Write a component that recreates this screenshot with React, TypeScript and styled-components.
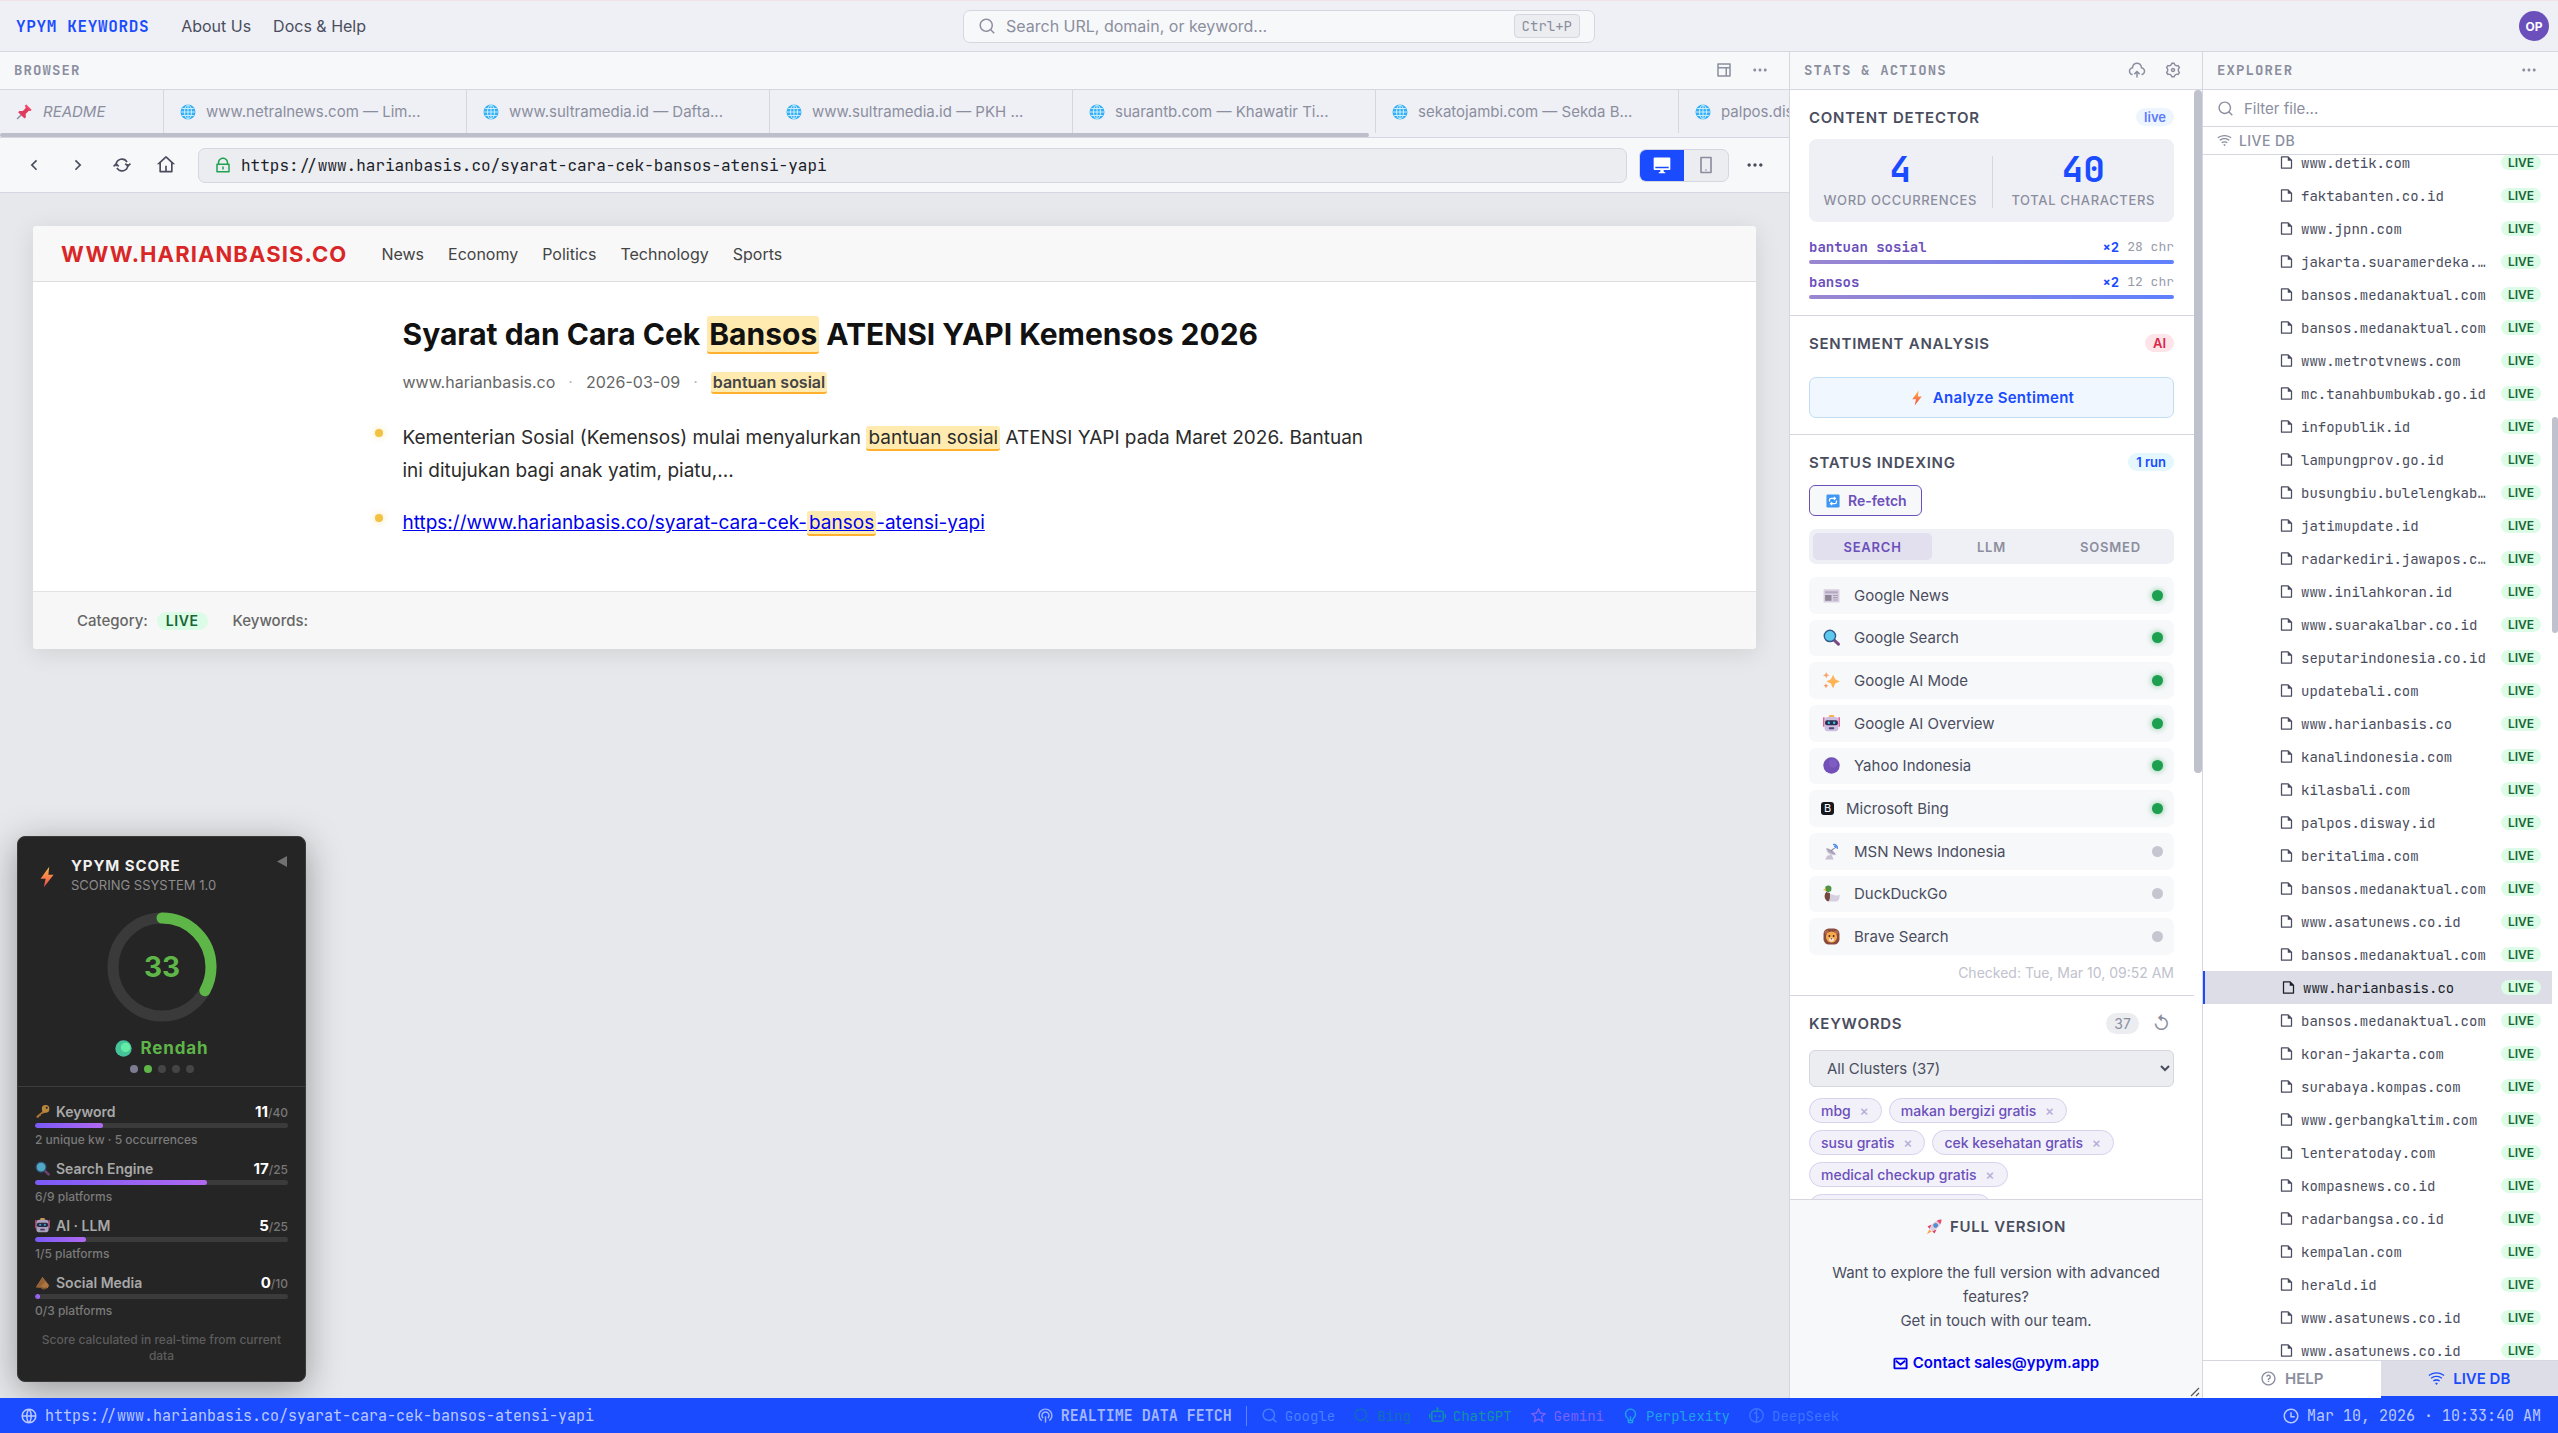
import React from "react";
import styled, { createGlobalStyle, css } from "styled-components";
import {
  RiSearchLine,
  RiSearch2Line,
  RiLayoutLine,
  RiMoreFill,
  RiUploadCloud2Line,
  RiSettings3Line,
  RiArrowLeftSLine,
  RiArrowRightSLine,
  RiHome4Line,
  RiLockLine,
  RiMacFill,
  RiSmartphoneLine,
  RiFile3Line,
  RiWifiLine,
  RiQuestionLine,
  RiTimeLine,
  RiGlobalLine,
  RiSignalTowerLine,
  RiRobot2Line,
  RiStarLine,
  RiLightbulbLine,
} from "react-icons/ri";

const c = {
  border: "#d5d6df",
  chrome: "#eff0f5",
  panel: "#f7f8fa",
  muted: "#8b8e9e",
  text: "#4a4d5e",
  dark: "#1b1d2a",
  blue: "#1a4bff",
  purple: "#6b4fbb",
};
const sans = `Inter, "Noto Sans", sans-serif`;
const mono = `"JetBrains Mono", "DejaVu Sans Mono", monospace`;

const Global = createGlobalStyle`
  *, *::before, *::after { box-sizing: border-box; }
  body { margin: 0; font-family: ${sans}; font-size: 15px; color: ${c.text}; background: #fff; }
  button, input, select { font: inherit; color: inherit; }
  button { background: none; border: 0; padding: 0; cursor: pointer; }
  h1, h2, h3, p, ul { margin: 0; padding: 0; }
  ul { list-style: none; }
  svg { display: block; flex: none; }
`;

const Shell = styled.div`
  height: 100vh;
  display: grid;
  grid-template-rows: auto minmax(0, 1fr) auto;
`;

/* ---------- top bar ---------- */
const TopBar = styled.header`
  display: grid;
  grid-template-columns: 1fr 632px 1fr;
  align-items: center;
  height: 52px;
  padding: 0 9px;
  background: ${c.chrome};
  border-top: 1px solid #f1e3e8;
  border-bottom: 1px solid ${c.border};
`;
const TopNav = styled.nav`
  display: flex;
  align-items: center;
  gap: 22px;
  padding-left: 7px;
`;
const Brand = styled.span`
  font: bold 16px ${mono};
  letter-spacing: 0.04em;
  color: ${c.blue};
  margin-right: 10px;
`;
const TopLink = styled.a`
  font-size: 16px;
  color: ${c.text};
  text-decoration: none;
`;
const SearchBox = styled.label`
  display: flex;
  align-items: center;
  gap: 10px;
  height: 33px;
  padding: 0 14px;
  border: 1px solid ${c.border};
  border-radius: 7px;
  background: ${c.panel};
  color: ${c.muted};
`;
const PlainInput = styled.input<{ $size?: number }>`
  flex: 1;
  min-width: 0;
  border: 0;
  outline: 0;
  padding: 0;
  background: transparent;
  font-size: ${(p) => p.$size ?? 16}px;
  &::placeholder { color: ${c.muted}; opacity: 1; }
`;
const Kbd = styled.kbd`
  padding: 3px 7px;
  border: 1px solid ${c.border};
  border-radius: 4px;
  background: #ecedf1;
  font: 14px/16px ${mono};
`;
const Avatar = styled.button`
  justify-self: end;
  width: 30px;
  height: 30px;
  border-radius: 50%;
  background: ${c.purple};
  color: #fff;
  font-size: 12px;
  font-weight: 700;
`;

/* ---------- panels ---------- */
const Main = styled.main`
  display: grid;
  grid-template-columns: minmax(0, 1fr) 413px 356px;
  min-height: 0;
`;
const Panel = styled.section<{ $line?: boolean }>`
  display: flex;
  flex-direction: column;
  min-width: 0;
  min-height: 0;
  overflow: hidden;
  ${(p) => p.$line && css`border-left: 1px solid ${c.border};`}
`;
const PanelHead = styled.div`
  display: flex;
  align-items: center;
  justify-content: space-between;
  flex: none;
  height: 38px;
  padding: 0 20px 2px 14px;
  background: ${c.panel};
  border-bottom: 1px solid ${c.border};
`;
const PanelTitle = styled.h2`
  font: bold 14px ${mono};
  letter-spacing: 0.08em;
  color: ${c.muted};
`;
const HeadTools = styled.div`
  display: flex;
  gap: 18px;
  color: ${c.muted};
`;
const IconButton = styled.button`
  display: grid;
  place-items: center;
`;

/* ---------- browser ---------- */
const TabStrip = styled.div`
  display: flex;
  flex: none;
  height: 48px;
  overflow: hidden;
  position: relative;
  background: ${c.chrome};
  border-bottom: 1px solid ${c.border};
`;
const Tab = styled.button<{ $pinned?: boolean }>`
  display: flex;
  align-items: center;
  gap: 10px;
  flex: none;
  width: ${(p) => (p.$pinned ? 164 : 303)}px;
  height: 43px;
  padding: 0 16px;
  border-right: 1px solid ${c.border};
  color: ${c.muted};
  font-size: 15px;
  font-style: ${(p) => (p.$pinned ? "italic" : "normal")};
  white-space: nowrap;
`;
const TabScroll = styled.span`
  position: absolute;
  left: 0;
  bottom: 0;
  width: 1369px;
  height: 4px;
  border-radius: 2px;
  background: #bcbec9;
`;
const AddressRow = styled.div`
  display: flex;
  align-items: center;
  flex: none;
  height: 55px;
  gap: 12px;
  padding: 0 20px 0 16px;
  background: ${c.panel};
  border-bottom: 1px solid ${c.border};
`;
const NavButtons = styled.div`
  display: flex;
  gap: 8px;
  margin-right: 2px;
  color: ${c.text};
`;
const NavButton = styled(IconButton)`
  width: 36px;
  height: 36px;
`;
const Address = styled.label`
  display: flex;
  align-items: center;
  gap: 9px;
  flex: 1;
  height: 35px;
  padding: 0 15px;
  border: 1px solid ${c.border};
  border-radius: 7px;
  background: #ecedf1;
  color: #1fa150;
`;
const AddressInput = styled(PlainInput)`
  font-family: ${mono};
  color: ${c.dark};
`;
const Devices = styled.div`
  display: flex;
  height: 33px;
  border: 1px solid ${c.border};
  border-radius: 7px;
  overflow: hidden;
  background: #ecedf1;
`;
const Device = styled.button<{ $on?: boolean }>`
  display: grid;
  place-items: center;
  width: 44px;
  background: ${(p) => (p.$on ? c.blue : "transparent")};
  color: ${(p) => (p.$on ? "#fff" : c.muted)};
`;
const MoreButton = styled(IconButton)`
  width: 28px;
  color: ${c.text};
`;
const Canvas = styled.div`
  flex: 1;
  min-height: 0;
  position: relative;
  padding: 33px;
  background: #e7e8eb;
`;

/* ---------- article ---------- */
const Article = styled.article`
  border-radius: 4px;
  overflow: hidden;
  background: #fff;
  box-shadow: 0 4px 24px rgba(0, 0, 0, 0.1);
`;
const SiteHead = styled.header`
  display: flex;
  align-items: center;
  height: 56px;
  padding: 0 28px;
  gap: 34px;
  background: #f8f8f8;
  border-bottom: 1px solid #dddddf;
`;
const SiteName = styled.strong`
  font-size: 22px;
  letter-spacing: 0.05em;
  color: #d92727;
`;
const SiteNav = styled.nav`
  display: flex;
  gap: 24px;
`;
const SiteLink = styled.a`
  font-size: 16px;
  color: #444;
  text-decoration: none;
`;
const Body = styled.div`
  max-width: 984px;
  height: 309px;
  margin: 0 auto;
  padding-top: 32px;
`;
const Headline = styled.h1`
  font-size: 30px;
  line-height: 40px;
  font-weight: 700;
  color: #111;
`;
const Mark = styled.mark`
  padding: 0 2px;
  border-radius: 3px;
  border-bottom: 2px solid #ffb02e;
  background: #ffebb0;
  color: inherit;
`;
const Meta = styled.div`
  display: flex;
  align-items: center;
  gap: 13px;
  margin: 18px 0 29px;
  font-size: 16px;
  line-height: 20px;
  color: #666;
  i { color: #bbb; font-style: normal; }
  b { font-weight: 600; color: #444; }
`;
const Points = styled.ul`
  display: grid;
  gap: 19px;
  font-size: 19px;
  line-height: 33px;
  color: #2b2b2b;
`;
const Point = styled.li`
  position: relative;
  &::before {
    content: "";
    position: absolute;
    left: -28px;
    top: 8px;
    width: 8px;
    height: 8px;
    border-radius: 50%;
    background: #f2c141;
    box-shadow: 0 0 6px rgba(242, 193, 65, 0.5);
  }
  a { color: #0000ee; }
`;
const ArticleFoot = styled.footer`
  display: flex;
  align-items: center;
  height: 58px;
  padding: 0 44px;
  gap: 9px;
  background: #f7f7f7;
  border-top: 1px solid #e3e3e5;
  font-size: 15px;
  font-weight: 500;
  color: #666;
`;
const Pill = styled.span<{ $bg: string; $fg: string }>`
  padding: 0 8px;
  border-radius: 10px;
  background: ${(p) => p.$bg};
  color: ${(p) => p.$fg};
  font-size: 13px;
  line-height: 18px;
  font-weight: 600;
`;
const CategoryPill = styled(Pill)`
  margin-right: 16px;
  padding: 0 9px;
  font-size: 14px;
  letter-spacing: 0.04em;
`;

/* ---------- score card ---------- */
const ScoreCard = styled.aside`
  position: absolute;
  left: 17px;
  bottom: 16px;
  width: 289px;
  border: 1px solid #3a3a3a;
  border-radius: 8px;
  background: #252525;
  color: #a8a8a8;
  box-shadow: 0 8px 36px rgba(0, 0, 0, 0.35);
`;
const ScoreTop = styled.div`
  display: flex;
  flex-direction: column;
  align-items: center;
  height: 250px;
  padding: 19px 18px 0;
  border-bottom: 1px solid #3d3d3d;
`;
const ScoreHead = styled.div`
  align-self: stretch;
  display: flex;
  gap: 15px;
  height: 56px;
`;
const BoltSlot = styled.span`
  width: 20px;
  padding-top: 10px;
`;
const ScoreTitle = styled.h3`
  font-size: 15px;
  line-height: 20px;
  font-weight: 700;
  letter-spacing: 0.06em;
  color: #f0f0f0;
`;
const ScoreSub = styled.p`
  font-size: 13px;
  line-height: 19px;
  color: #8c8c8c;
`;
const Collapse = styled.button`
  align-self: flex-start;
  margin-left: auto;
  color: #707070;
`;
const Level = styled.div`
  display: flex;
  align-items: center;
  gap: 9px;
  margin-top: 14px;
  font-size: 17px;
  line-height: 24px;
  font-weight: 700;
  letter-spacing: 0.05em;
  color: #5eb548;
`;
const Steps = styled.div`
  display: flex;
  gap: 6px;
  margin-top: 5px;
`;
const Step = styled.span<{ $color: string }>`
  width: 8px;
  height: 8px;
  border-radius: 50%;
  background: ${(p) => p.$color};
`;
const Metrics = styled.div`
  display: grid;
  gap: 8px;
  padding: 14px 17px 11px;
`;
const Metric = styled.div`
  height: 49px;
`;
const MetricRow = styled.div`
  display: flex;
  align-items: center;
  height: 20px;
  gap: 6px;
  font-size: 14px;
  font-weight: 600;
  svg { opacity: 0.8; }
  b { color: #fff; font-weight: 700; }
`;
const MetricScore = styled.span`
  margin-left: auto;
  font-size: 12px;
  font-weight: 500;
  color: #777;
  b { font-size: 15px; }
`;
const Track = styled.div`
  height: 5px;
  margin: 2px 0;
  border-radius: 3px;
  overflow: hidden;
  background: #3b3b3b;
`;
const Fill = styled.div`
  height: 100%;
  border-radius: 3px;
  background: linear-gradient(90deg, #7a5af8, #b069f0);
`;
const MetricNote = styled.p`
  font-size: 12px;
  line-height: 20px;
  font-weight: 500;
  color: #7a7a7a;
`;
const ScoreNote = styled.p`
  padding: 0 20px 17px;
  font-size: 12px;
  line-height: 16px;
  font-weight: 500;
  text-align: center;
  color: #5d5d5d;
`;

/* ---------- stats ---------- */
const StatsScroll = styled.div`
  flex: 1;
  min-height: 0;
  overflow: hidden;
  position: relative;
`;
const Thumb = styled.span<{ $top: number; $h: number; $w: number }>`
  position: absolute;
  right: 0;
  top: ${(p) => p.$top}px;
  width: ${(p) => p.$w}px;
  height: ${(p) => p.$h}px;
  border-radius: 4px;
  background: #bfc1cc;
`;
const Block = styled.section<{ $h?: number }>`
  height: ${(p) => (p.$h ? `${p.$h}px` : "auto")};
  margin-right: 8px;
  padding: 14px 20px 0 19px;
  border-bottom: 1px solid ${c.border};
`;
const BlockHead = styled.div`
  display: flex;
  align-items: center;
  justify-content: space-between;
  height: 26px;
`;
const BlockTitle = styled.h3`
  font-size: 15px;
  font-weight: 600;
  letter-spacing: 0.05em;
  color: ${c.text};
`;
const Counters = styled.div`
  display: grid;
  grid-template-columns: 1fr 1fr;
  height: 83px;
  margin: 9px 0 15px;
  padding: 17px 0;
  border-radius: 8px;
  background: ${c.chrome};
`;
const Counter = styled.div`
  text-align: center;
  font-size: 13px;
  line-height: 16px;
  font-weight: 500;
  letter-spacing: 0.05em;
  white-space: nowrap;
  color: ${c.muted};
  & + & { border-left: 1px solid ${c.border}; }
  strong { display: block; margin: -4px 0 6px; font: bold 36px/34px ${mono}; letter-spacing: 0; color: ${c.blue}; }
`;
const TermRow = styled.div`
  height: 35px;
`;
const TermLine = styled.div`
  display: flex;
  gap: 8px;
  align-items: center;
  height: 20px;
  font: 13px/20px ${mono};
  color: #999bab;
  strong { margin-right: auto; font-size: 14px; color: ${c.purple}; }
  b { font-size: 14px; color: ${c.blue}; }
`;
const TermBar = styled.div`
  height: 4px;
  margin-top: 3px;
  border-radius: 2px;
  background: linear-gradient(90deg, #9b86cf, #5f80ff);
`;
const Analyze = styled.button`
  display: flex;
  align-items: center;
  justify-content: center;
  gap: 8px;
  width: 100%;
  height: 41px;
  margin-top: 21px;
  border: 1px solid #bfdcf2;
  border-radius: 7px;
  background: #f1f7ff;
  color: ${c.blue};
  font-size: 15px;
  font-weight: 600;
  letter-spacing: 0.02em;
`;
const Refetch = styled.button`
  display: flex;
  align-items: center;
  gap: 8px;
  height: 31px;
  margin: 10px 0 13px;
  padding: 0 14px 0 16px;
  border: 1px solid ${c.purple};
  border-radius: 6px;
  background: ${c.panel};
  color: ${c.purple};
  font-size: 14px;
  font-weight: 600;
`;
const Segments = styled.div`
  display: grid;
  grid-template-columns: repeat(3, 1fr);
  height: 35px;
  padding: 4px;
  border-radius: 7px;
  background: ${c.chrome};
`;
const Segment = styled.button<{ $on?: boolean }>`
  border-radius: 5px;
  background: ${(p) => (p.$on ? "#e2e0ee" : "transparent")};
  color: ${(p) => (p.$on ? c.purple : c.muted)};
  font-size: 13px;
  font-weight: 600;
  letter-spacing: 0.06em;
`;
const Engines = styled.ul`
  display: grid;
  grid-template-rows: repeat(9, 1fr);
  gap: 6px;
  height: 378px;
  margin: 13px 0 8px;
`;
const Engine = styled.li<{ $tight?: boolean }>`
  display: flex;
  align-items: center;
  gap: ${(p) => (p.$tight ? 12 : 14)}px;
  padding: 0 11px 0 ${(p) => (p.$tight ? 12 : 14)}px;
  border-radius: 7px;
  background: ${c.panel};
  font-size: 15px;
`;
const Dot = styled.span<{ $on: boolean }>`
  width: 11px;
  height: 11px;
  margin-left: auto;
  border-radius: 50%;
  background: ${(p) => (p.$on ? "#1c9f4e" : "#c5c6d0")};
  box-shadow: ${(p) => (p.$on ? "0 0 6px rgba(28, 159, 78, 0.6)" : "none")};
`;
const Checked = styled.p`
  font-size: 14px;
  line-height: 20px;
  text-align: right;
  color: #c0c2cd;
`;
const HeadSide = styled.div`
  display: flex;
  align-items: center;
  gap: 14px;
  padding-right: 4px;
  font-size: 18px;
  color: ${c.muted};
`;
const CountPill = styled.span`
  padding: 0 8px;
  border-radius: 11px;
  background: #ecedf1;
  font-size: 14px;
  line-height: 21px;
`;
const Clusters = styled.select`
  width: 100%;
  height: 37px;
  margin: 14px 0 11px;
  padding: 0 0 0 13px;
  border: 1px solid ${c.border};
  border-radius: 6px;
  background: #ecedf1;
  font-size: 15px;
`;
const Chips = styled.ul`
  display: flex;
  flex-wrap: wrap;
  gap: 7px;
`;
const Chip = styled.li`
  display: flex;
  align-items: center;
  gap: 8px;
  height: 25px;
  padding: 0 11px;
  border: 1px solid #d6d1ec;
  border-radius: 13px;
  background: #f2f1f9;
  color: ${c.purple};
  font-size: 14px;
  font-weight: 500;
  button { width: 11px; font-size: 14px; line-height: 16px; color: #b7add9; }
`;
const Promo = styled.footer`
  position: relative;
  display: flex;
  flex-direction: column;
  align-items: center;
  flex: none;
  height: 199px;
  padding: 15px 24px;
  background: ${c.panel};
  border-top: 1px solid ${c.border};
  text-align: center;
`;
const PromoTitle = styled.h3`
  display: flex;
  align-items: center;
  gap: 8px;
  font-size: 15px;
  line-height: 24px;
  font-weight: 600;
  letter-spacing: 0.05em;
`;
const PromoText = styled.p`
  margin: 22px 0 18px;
  font-size: 15px;
  line-height: 24px;
`;
const Mail = styled.a`
  display: flex;
  align-items: center;
  gap: 5px;
  font-size: 15px;
  line-height: 24px;
  font-weight: 600;
  color: #0000ee;
  text-decoration: none;
`;
const Grip = styled.svg`
  position: absolute;
  right: 2px;
  bottom: 1px;
`;

/* ---------- explorer ---------- */
const Filter = styled.label`
  display: flex;
  align-items: center;
  gap: 10px;
  flex: none;
  height: 37px;
  padding: 0 14px;
  border-bottom: 1px solid ${c.border};
  color: ${c.muted};
`;
const Group = styled.div`
  display: flex;
  align-items: center;
  gap: 7px;
  flex: none;
  height: 28px;
  padding: 0 14px;
  border-bottom: 1px solid ${c.border};
  color: ${c.muted};
  font-size: 14px;
  font-weight: 500;
  letter-spacing: 0.03em;
`;
const FileArea = styled.div`
  flex: 1;
  min-height: 0;
  position: relative;
  overflow: hidden;
`;
const FileList = styled.ul`
  margin: -9px 6px 0 0;
`;
const FileRow = styled.li<{ $on?: boolean }>`
  display: flex;
  align-items: center;
  gap: 7px;
  height: 33px;
  padding: 0 11px 0 76px;
  color: ${(p) => (p.$on ? c.dark : c.text)};
  background: ${(p) => (p.$on ? "#dcdde6" : "transparent")};
  border-left: ${(p) => (p.$on ? `2px solid ${c.blue}` : "0")};
  font: 14px ${mono};
`;
const Live = styled.span`
  margin-left: auto;
  padding: 0 7px;
  border-radius: 8px;
  background: #dcfce7;
  color: #166534;
  font: 600 12px/15px ${sans};
`;
const BottomTabs = styled.div`
  display: grid;
  grid-template-columns: 1fr 1fr;
  flex: none;
  height: 38px;
  border-top: 1px solid ${c.border};
`;
const BottomTab = styled.button<{ $on?: boolean }>`
  display: flex;
  align-items: center;
  justify-content: center;
  gap: 8px;
  border-bottom: 2px solid ${(p) => (p.$on ? c.blue : "transparent")};
  background: ${(p) => (p.$on ? "#dcdde6" : "#fff")};
  color: ${(p) => (p.$on ? c.blue : c.muted)};
  font-size: 15px;
  font-weight: 600;
`;

/* ---------- status bar ---------- */
const StatusBar = styled.footer`
  display: flex;
  align-items: center;
  justify-content: space-between;
  height: 35px;
  padding: 0 17px 0 20px;
  background: ${c.blue};
  color: #bac9ff;
  font: 15px ${mono};
`;
const StatusItem = styled.span<{ $color?: string }>`
  display: flex;
  align-items: center;
  gap: 7px;
  color: ${(p) => p.$color ?? "inherit"};
`;
const Feeds = styled.div`
  display: flex;
  align-items: center;
  gap: 18px;
  font-size: 14px;
`;
const FeedTitle = styled(StatusItem)`
  padding-right: 14px;
  margin-right: -4px;
  border-right: 1px solid #5f82ff;
  font-size: 15px;
  font-weight: bold;
  color: #a3b7ff;
`;

/* ---------- drawn glyphs ---------- */
const glyphs: Record<string, React.ReactNode> = {
  sync: (
    <g fill="none" stroke="currentColor" strokeWidth="1.400">
      <path d="M2.800 9V8a5.200 5.200 0 0 1 9.700-2.600M13.200 7v1a5.200 5.200 0 0 1-9.700 2.600" />
      <path d="M.5 9.200 2.800 6.900l2.300 2.300M15.500 6.800l-2.300 2.300-2.300-2.300" />
    </g>
  ),
  mail: (
    <g fill="none" stroke="currentColor" strokeWidth="2">
      <rect x="1.500" y="2.800" width="13" height="10.400" rx=".8" />
      <path d="m3 5 5 4 5-4" />
    </g>
  ),
  split: (
    <g fill="none" stroke="currentColor" strokeWidth="1.300">
      <circle cx="8" cy="8" r="6.300" />
      <path d="M8 2v12M8 5 5.800 6.200M8 10.500l2.200-1.200" />
    </g>
  ),
  pin: (
    <>
      <path d="M5.500 10.500 1 15" stroke="#8a8fa3" strokeWidth="1.300" />
      <path d="m9.500 1.500 5 4.800-1 1.200-1.400-.2-3 3 .2 3-1.300 1.200L2 8.700l1.200-1.200 3.200.1 2.800-3-.6-1.700z" fill="#e23a5e" />
      <path d="m9.500 1.500 5 4.800-1 1.200-4.900-4.600z" fill="#f8496f" />
    </>
  ),
  globe: (
    <>
      <circle cx="8" cy="8" r="7.500" fill="#35aef5" />
      <g fill="none" stroke="#c9efff" strokeWidth="1">
        <ellipse cx="8" cy="8" rx="3.500" ry="7" />
        <path d="M8 1v14M1 8h14M2.200 4.500h11.600M2.200 11.500h11.600" />
      </g>
    </>
  ),
  bolt: (
    <>
      <defs>
        <linearGradient id="boltFill" x1="0" y1="0" x2="0" y2="1">
          <stop offset="0" stopColor="#ffb545" />
          <stop offset="1" stopColor="#ee4b4b" />
        </linearGradient>
      </defs>
      <path d="M9.600.5 3.300 9.300h3.700l-1.300 6.200L12.800 6.400H9z" fill="url(#boltFill)" />
    </>
  ),
  refresh: (
    <>
      <rect x=".5" y=".5" width="15" height="15" rx="1.500" fill="#3f97f3" />
      <path d="M4 8.500V6.800C4 5.500 5 5 6 5h4.500M9 3.300 10.800 5 9 6.700M12 7.500v1.700c0 1.300-1 1.800-2 1.800H5.500M7 9.300 5.200 11 7 12.700" fill="none" stroke="#fff" strokeWidth="1.400" />
    </>
  ),
  news: (
    <>
      <rect x=".5" y="2" width="15" height="12.500" rx=".8" fill="#d9cfe2" />
      <path d="M2 4h12v2H2z" fill="#b3a8bf" />
      <path d="M2 7.500h6V13H2z" fill="#8d8796" />
      <path d="M9.500 8H14M9.500 10H14M9.500 12.300H14" stroke="#a89db6" />
    </>
  ),
  lens: (
    <>
      <path d="m10.500 10.500 4 3.800" stroke="#7c4a80" strokeWidth="2.800" strokeLinecap="round" />
      <circle cx="6.500" cy="6.500" r="5.300" fill="#5cc9ec" stroke="#33598c" strokeWidth="1.300" />
    </>
  ),
  sparkles: (
    <g fill="#ffb355">
      <path d="M9.500 2.500 11.500 6.800l4.300 2.100-4.300 2-2 4.600-2.100-4.600-4.200-2L7.400 6.800z" />
      <path d="m3 0 .8 2L6 3l-2.200.9L3 6l-.8-2.100L0 3l2.200-1z" fill="#ffa06a" />
      <path d="m2.800 10.500.7 1.700 1.700.7-1.700.8-.7 1.800-.7-1.800-1.700-.8 1.700-.7z" fill="#ff9357" />
    </g>
  ),
  robot: (
    <>
      <path d="M.8 2v9M15.200 2v9" stroke="#e2518c" strokeWidth="1.400" />
      <rect x="5.500" y="0" width="5" height="3" rx="1" fill="#f5b355" />
      <rect x="1.500" y="1.800" width="13" height="13.500" rx="3" fill="#cdbfe3" />
      <rect x="2" y="5" width="12" height="4.600" rx="1.800" fill="#2d2a4a" />
      <circle cx="5.500" cy="7.300" r="1.200" fill="#38c2ef" />
      <circle cx="10.500" cy="7.300" r="1.200" fill="#38c2ef" />
      <rect x="5.500" y="11.500" width="5" height="1.800" rx=".5" fill="#50486e" />
    </>
  ),
  purple: (
    <>
      <circle cx="8" cy="8" r="7.700" fill="#7350b8" />
      <circle cx="9.500" cy="6" r="4" fill="#8666c8" opacity=".6" />
    </>
  ),
  green: (
    <>
      <circle cx="8" cy="8" r="7.700" fill="#45c39a" />
      <circle cx="10" cy="7" r="4.500" fill="#6bf5a8" opacity=".8" />
    </>
  ),
  dish: (
    <>
      <path d="M2 15.500h8l-2-4.500-4 1z" fill="#c9c0d4" />
      <path d="M3 5c0 5 4 8 9 6z" fill="#d9d2e2" />
      <path d="M3 5c2-1 9 3.500 9 6-3 0-8-2-9-6z" fill="#ada3bb" />
      <path d="m7.500 7.500 3.500-3" stroke="#8b8199" />
      <path d="M9.500 1.500c2.500-.5 4.500 1.500 4 4M10.500 3.300c1-.2 1.700.5 1.500 1.500" fill="none" stroke="#4787e8" strokeWidth="1.200" />
    </>
  ),
  duck: (
    <>
      <path d="M4.500 7 3 10c-1 3 1 5.500 3 5.500h6.500C15 15.500 16 12 15.500 9L13 10 7 8.500z" fill="#d6cfdf" />
      <path d="M3 6.500C0 10 2 14.500 5 15.500c2-2 1.500-5 1.500-8z" fill="#75473e" />
      <circle cx="5" cy="3.500" r="3" fill="#4f9440" />
      <path d="M2.500 3 0 4.800l3 .7z" fill="#f2b135" />
    </>
  ),
  lion: (
    <>
      <rect x=".5" y=".5" width="15" height="15" rx="5" fill="#8a4b3f" />
      <circle cx="3.500" cy="4" r="2" fill="#b0694e" />
      <circle cx="12.500" cy="4" r="2" fill="#b0694e" />
      <circle cx="8" cy="8.500" r="5.200" fill="#f7a94a" />
      <circle cx="6" cy="7.500" r=".9" fill="#402a2a" />
      <circle cx="10" cy="7.500" r=".9" fill="#402a2a" />
      <ellipse cx="8" cy="11" rx="2.400" ry="2" fill="#ffe3d0" />
      <path d="M7 9.600h2L8 11z" fill="#5a2f31" />
    </>
  ),
  rocket: (
    <>
      <path d="M5.500 5.500 1.500 7.500l2.500 2.500zM10.500 10.500 8.500 14.500 6 12z" fill="#e83a62" />
      <path d="M15.500.5C10.500.5 6.500 4 3.500 9.500l3 3C12 9.500 15.500 5.500 15.500.5z" fill="#d8cfe2" />
      <path d="M15.500.5c-1.800 0-3.300.4-4.700 1.200l3.500 3.500c.8-1.400 1.200-2.900 1.200-4.700z" fill="#f04a6c" />
      <circle cx="9.600" cy="6.400" r="2" fill="#399be8" stroke="#7b6a96" strokeWidth=".7" />
      <path d="M3.500 10.500.8 15.200l4.700-2.700z" fill="#ff9d3d" />
    </>
  ),
  key: (
    <>
      <path d="m9 7-7.500 6 .3 1.700 2.400-.2.300-1.500 1.500-.2.300-1.600L11 9z" fill="#d08a35" />
      <circle cx="11.300" cy="5.200" r="4" fill="#e0a040" />
      <circle cx="12.500" cy="4" r="1.100" fill="#252525" />
    </>
  ),
  horn: (
    <>
      <path d="M8 2 1 13l12.500 1L15 11z" fill="#d08a48" />
      <path d="M8 2 1 13l4 .3L11 7z" fill="#b07238" />
      <path d="M7 12.500c0 3 4.500 3 5 .5" fill="none" stroke="#a06a3c" strokeWidth="1.300" />
    </>
  ),
};
const Glyph = ({ name, size = 17 }: { name: string; size?: number }) => (
  <svg width={size} height={size} viewBox="0 0 16 16" aria-hidden="true">
    {glyphs[name]}
  </svg>
);

const tabs = [
  "www.netralnews.com — Lim...",
  "www.sultramedia.id — Dafta...",
  "www.sultramedia.id — PKH ...",
  "suarantb.com — Khawatir Ti...",
  "sekatojambi.com — Sekda B...",
  "palpos.disway.id",
];
const engines: [string, string, boolean][] = [
  ["news", "Google News", true],
  ["lens", "Google Search", true],
  ["sparkles", "Google AI Mode", true],
  ["robot", "Google AI Overview", true],
  ["purple", "Yahoo Indonesia", true],
  ["bing", "Microsoft Bing", true],
  ["dish", "MSN News Indonesia", false],
  ["duck", "DuckDuckGo", false],
  ["lion", "Brave Search", false],
];
const metrics = [
  { icon: "key", label: "Keyword", score: 11, max: 40, fill: 27, note: "2 unique kw · 5 occurrences" },
  { icon: "lens", label: "Search Engine", score: 17, max: 25, fill: 68, note: "6/9 platforms" },
  { icon: "robot", label: "AI · LLM", score: 5, max: 25, fill: 20, note: "1/5 platforms" },
  { icon: "horn", label: "Social Media", score: 0, max: 10, fill: 2, note: "0/3 platforms" },
];
const chips = ["mbg", "makan bergizi gratis", "susu gratis", "cek kesehatan gratis", "medical checkup gratis", "sekolah rakyat gratis"];
const files = `www.detik.com
faktabanten.co.id
www.jpnn.com
jakarta.suaramerdeka.…
bansos.medanaktual.com
bansos.medanaktual.com
www.metrotvnews.com
mc.tanahbumbukab.go.id
infopublik.id
lampungprov.go.id
busungbiu.bulelengkab…
jatimupdate.id
radarkediri.jawapos.c…
www.inilahkoran.id
www.suarakalbar.co.id
seputarindonesia.co.id
updatebali.com
www.harianbasis.co
kanalindonesia.com
kilasbali.com
palpos.disway.id
beritalima.com
bansos.medanaktual.com
www.asatunews.co.id
bansos.medanaktual.com
www.harianbasis.co
bansos.medanaktual.com
koran-jakarta.com
surabaya.kompas.com
www.gerbangkaltim.com
lenteratoday.com
kompasnews.co.id
radarbangsa.co.id
kempalan.com
herald.id
www.asatunews.co.id
www.asatunews.co.id`.split("\n");
const SELECTED = 25;
const PAGE_URL = "https://www.harianbasis.co/syarat-cara-cek-bansos-atensi-yapi";

const BingBadge = styled.span`
  width: 13px;
  border-radius: 3px;
  background: #16171f;
  color: #fff;
  font-size: 11px;
  line-height: 13px;
  text-align: center;
`;

const Gauge = ({ value }: { value: number }) => {
  const r = 49;
  const len = 2 * Math.PI * r;
  return (
    <svg width="110" height="110" viewBox="0 0 110 110" role="img" aria-label={`Score ${value}`}>
      <circle cx="55" cy="55" r={r} fill="none" stroke="#3a3a3a" strokeWidth="11" />
      <circle
        cx="55"
        cy="55"
        r={r}
        fill="none"
        stroke="#5eb548"
        strokeWidth="11"
        strokeLinecap="round"
        strokeDasharray={`${(len * value) / 100} ${len}`}
        transform="rotate(-90 55 55)"
      />
      <text x="55" y="65" textAnchor="middle" fontSize="28" fontWeight="700" fontFamily="Inter" fill="#5eb548">
        {value}
      </text>
    </svg>
  );
};

const Browser = () => (
  <Panel>
    <PanelHead>
      <PanelTitle>BROWSER</PanelTitle>
      <HeadTools>
        <IconButton aria-label="Layout"><RiLayoutLine size={18} /></IconButton>
        <IconButton aria-label="More"><RiMoreFill size={18} /></IconButton>
      </HeadTools>
    </PanelHead>
    <TabStrip>
      <Tab $pinned><Glyph name="pin" />README</Tab>
      {tabs.map((t) => (
        <Tab key={t}><Glyph name="globe" size={16} />{t}</Tab>
      ))}
      <TabScroll />
    </TabStrip>
    <AddressRow>
      <NavButtons>
        <NavButton aria-label="Back"><RiArrowLeftSLine size={20} /></NavButton>
        <NavButton aria-label="Forward"><RiArrowRightSLine size={20} /></NavButton>
        <NavButton aria-label="Reload"><Glyph name="sync" size={18} /></NavButton>
        <NavButton aria-label="Home"><RiHome4Line size={20} /></NavButton>
      </NavButtons>
      <Address>
        <RiLockLine size={18} />
        <AddressInput aria-label="Address" defaultValue={PAGE_URL} />
      </Address>
      <Devices>
        <Device $on aria-label="Desktop"><RiMacFill size={20} /></Device>
        <Device aria-label="Mobile"><RiSmartphoneLine size={20} /></Device>
      </Devices>
      <MoreButton aria-label="More"><RiMoreFill size={20} /></MoreButton>
    </AddressRow>
    <Canvas>
      <Article>
        <SiteHead>
          <SiteName>WWW.HARIANBASIS.CO</SiteName>
          <SiteNav>
            {["News", "Economy", "Politics", "Technology", "Sports"].map((n) => (
              <SiteLink key={n} href="#">{n}</SiteLink>
            ))}
          </SiteNav>
        </SiteHead>
        <Body>
          <Headline>
            Syarat dan Cara Cek <Mark>Bansos</Mark> ATENSI YAPI Kemensos 2026
          </Headline>
          <Meta>
            <span>www.harianbasis.co</span><i>·</i><span>2026-03-09</span><i>·</i>
            <b><Mark>bantuan sosial</Mark></b>
          </Meta>
          <Points>
            <Point>
              Kementerian Sosial (Kemensos) mulai menyalurkan <Mark>bantuan sosial</Mark> ATENSI YAPI pada Maret 2026. Bantuan ini ditujukan bagi anak yatim, piatu,...
            </Point>
            <Point>
              <a href="#">https://www.harianbasis.co/syarat-cara-cek-<Mark>bansos</Mark>-atensi-yapi</a>
            </Point>
          </Points>
        </Body>
        <ArticleFoot>
          Category: <CategoryPill $bg="#dcfce7" $fg="#166534">LIVE</CategoryPill> Keywords:
        </ArticleFoot>
      </Article>
      <ScoreCard>
        <ScoreTop>
          <ScoreHead>
            <BoltSlot><Glyph name="bolt" size={22} /></BoltSlot>
            <div>
              <ScoreTitle>YPYM SCORE</ScoreTitle>
              <ScoreSub>SCORING SSYSTEM 1.0</ScoreSub>
            </div>
            <Collapse aria-label="Collapse">
              <svg width="10" height="11" viewBox="0 0 10 11"><path d="M10 0v11L0 5.500z" fill="currentColor" /></svg>
            </Collapse>
          </ScoreHead>
          <Gauge value={33} />
          <Level><Glyph name="green" />Rendah</Level>
          <Steps>
            {["#7d7c93", "#5eb548", "#454545", "#454545", "#454545"].map((s, i) => (
              <Step key={i} $color={s} />
            ))}
          </Steps>
        </ScoreTop>
        <Metrics>
          {metrics.map((m) => (
            <Metric key={m.label}>
              <MetricRow>
                <Glyph name={m.icon} size={15} />
                {m.label}
                <MetricScore><b>{m.score}</b>/{m.max}</MetricScore>
              </MetricRow>
              <Track><Fill style={{ width: `${m.fill}%` }} /></Track>
              <MetricNote>{m.note}</MetricNote>
            </Metric>
          ))}
        </Metrics>
        <ScoreNote>Score calculated in real-time from current data</ScoreNote>
      </ScoreCard>
    </Canvas>
  </Panel>
);

const Stats = () => (
  <Panel $line>
    <PanelHead>
      <PanelTitle>STATS &amp; ACTIONS</PanelTitle>
      <HeadTools>
        <IconButton aria-label="Upload"><RiUploadCloud2Line size={18} /></IconButton>
        <IconButton aria-label="Settings"><RiSettings3Line size={18} /></IconButton>
      </HeadTools>
    </PanelHead>
    <StatsScroll>
      <Block $h={226}>
        <BlockHead>
          <BlockTitle>CONTENT DETECTOR</BlockTitle>
          <Pill $bg="#edf5fe" $fg="#5c7cff">live</Pill>
        </BlockHead>
        <Counters>
          <Counter><strong>4</strong>WORD OCCURRENCES</Counter>
          <Counter><strong>40</strong>TOTAL CHARACTERS</Counter>
        </Counters>
        {[["bantuan sosial", "28 chr"], ["bansos", "12 chr"]].map(([t, n]) => (
          <TermRow key={t}>
            <TermLine><strong>{t}</strong><b>×2</b><span>{n}</span></TermLine>
            <TermBar />
          </TermRow>
        ))}
      </Block>
      <Block $h={119}>
        <BlockHead>
          <BlockTitle>SENTIMENT ANALYSIS</BlockTitle>
          <Pill $bg="#fde4e8" $fg="#dc2648">AI</Pill>
        </BlockHead>
        <Analyze><Glyph name="bolt" size={16} />Analyze Sentiment</Analyze>
      </Block>
      <Block $h={561}>
        <BlockHead>
          <BlockTitle>STATUS INDEXING</BlockTitle>
          <Pill $bg="#e3f7fc" $fg={c.blue}>1 run</Pill>
        </BlockHead>
        <Refetch><Glyph name="refresh" size={14} />Re-fetch</Refetch>
        <Segments>
          <Segment $on>SEARCH</Segment>
          <Segment>LLM</Segment>
          <Segment>SOSMED</Segment>
        </Segments>
        <Engines>
          {engines.map(([icon, name, on]) => (
            <Engine key={name} $tight={icon === "bing"}>
              {icon === "bing" ? <BingBadge>B</BingBadge> : <Glyph name={icon} />}
              {name}
              <Dot $on={on} />
            </Engine>
          ))}
        </Engines>
        <Checked>Checked: Tue, Mar 10, 09:52 AM</Checked>
      </Block>
      <Block>
        <BlockHead>
          <BlockTitle>KEYWORDS</BlockTitle>
          <HeadSide><CountPill>37</CountPill><button aria-label="Reset">↺</button></HeadSide>
        </BlockHead>
        <Clusters aria-label="Cluster"><option>All Clusters (37)</option></Clusters>
        <Chips>
          {chips.map((k) => (
            <Chip key={k}>{k}<button aria-label={`Remove ${k}`}>×</button></Chip>
          ))}
        </Chips>
      </Block>
      <Thumb $top={0} $h={683} $w={8} />
    </StatsScroll>
    <Promo>
      <PromoTitle><Glyph name="rocket" size={16} />FULL VERSION</PromoTitle>
      <PromoText>
        Want to explore the full version with advanced features?
        <br />
        Get in touch with our team.
      </PromoText>
      <Mail href="mailto:sales@ypym.app"><Glyph name="mail" size={15} />Contact sales@ypym.app</Mail>
      <Grip width="10" height="10" viewBox="0 0 10 10"><path d="M1 9 9 1M6 9l3-3" stroke="#555" strokeWidth="1.200" /></Grip>
    </Promo>
  </Panel>
);

const Explorer = () => (
  <Panel $line>
    <PanelHead>
      <PanelTitle>EXPLORER</PanelTitle>
      <HeadTools><IconButton aria-label="More"><RiMoreFill size={18} /></IconButton></HeadTools>
    </PanelHead>
    <Filter><RiSearchLine size={17} /><PlainInput $size={15} placeholder="Filter file..." aria-label="Filter file" /></Filter>
    <Group><RiWifiLine size={15} />LIVE DB</Group>
    <FileArea>
      <FileList>
        {files.map((f, i) => (
          <FileRow key={i} $on={i === SELECTED}>
            <RiFile3Line size={15} />{f}<Live>LIVE</Live>
          </FileRow>
        ))}
      </FileList>
      <Thumb $top={262} $h={216} $w={6} />
    </FileArea>
    <BottomTabs>
      <BottomTab><RiQuestionLine size={17} />HELP</BottomTab>
      <BottomTab $on><RiWifiLine size={17} />LIVE DB</BottomTab>
    </BottomTabs>
  </Panel>
);

export default function App() {
  return (
    <Shell>
      <Global />
      <TopBar>
        <TopNav>
          <Brand>YPYM KEYWORDS</Brand>
          <TopLink href="#">About Us</TopLink>
          <TopLink href="#">Docs &amp; Help</TopLink>
        </TopNav>
        <SearchBox>
          <RiSearchLine size={18} />
          <PlainInput placeholder="Search URL, domain, or keyword..." aria-label="Search" />
          <Kbd>Ctrl+P</Kbd>
        </SearchBox>
        <Avatar>OP</Avatar>
      </TopBar>
      <Main>
        <Browser />
        <Stats />
        <Explorer />
      </Main>
      <StatusBar>
        <StatusItem><RiGlobalLine size={18} />{PAGE_URL}</StatusItem>
        <Feeds>
          <FeedTitle><RiSignalTowerLine size={17} />REALTIME DATA FETCH</FeedTitle>
          <StatusItem $color="#4780ff"><RiSearchLine size={17} />Google</StatusItem>
          <StatusItem $color="#0e70b8"><RiSearch2Line size={17} />Bing</StatusItem>
          <StatusItem $color="#1292a5"><RiRobot2Line size={17} />ChatGPT</StatusItem>
          <StatusItem $color="#7a62fb"><RiStarLine size={17} />Gemini</StatusItem>
          <StatusItem $color="#1fa0e6"><RiLightbulbLine size={17} />Perplexity</StatusItem>
          <StatusItem $color="#3c74ff"><Glyph name="split" size={17} />DeepSeek</StatusItem>
        </Feeds>
        <StatusItem><RiTimeLine size={18} />Mar 10, 2026 · 10:33:40 AM</StatusItem>
      </StatusBar>
    </Shell>
  );
}
